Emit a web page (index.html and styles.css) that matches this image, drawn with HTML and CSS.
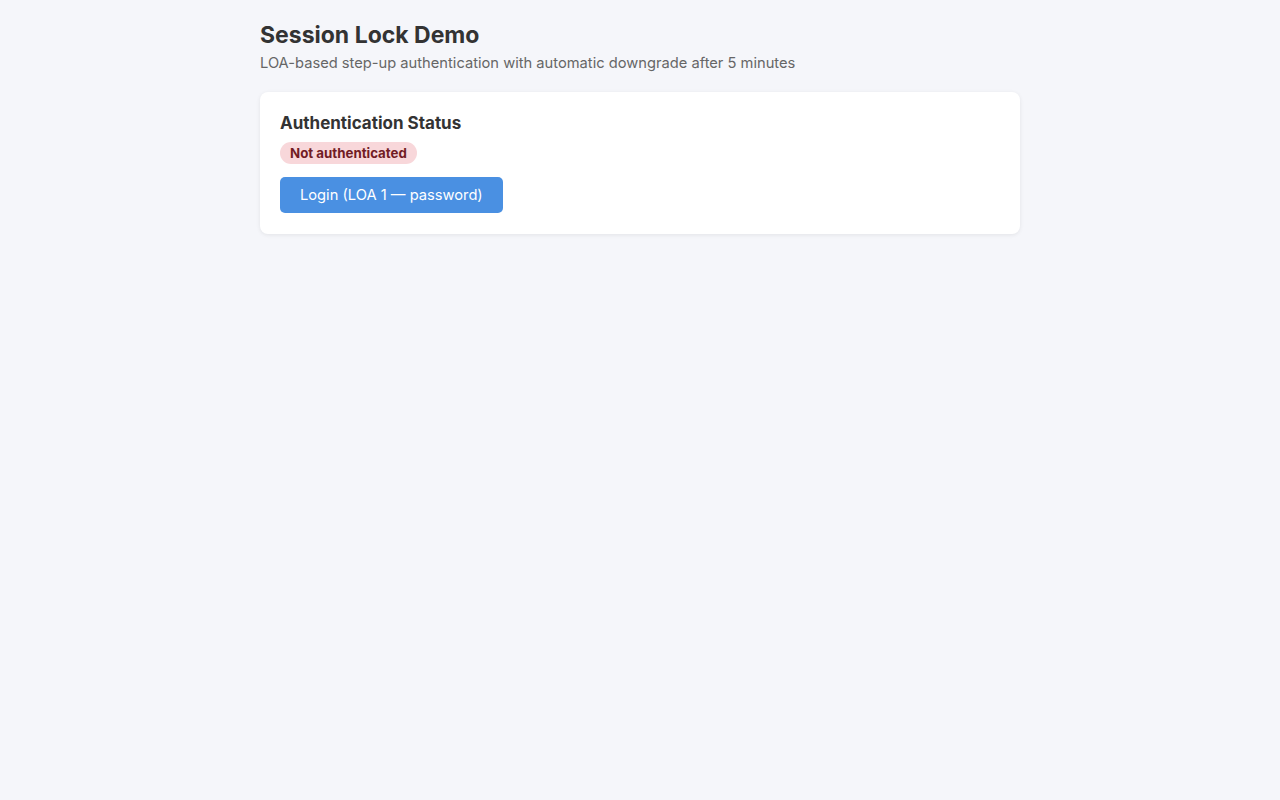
FILE: index.html
```html
<!DOCTYPE html>
<html lang="en">
<head>
    <meta charset="UTF-8">
    <meta name="viewport" content="width=device-width, initial-scale=1.0">
    <title>Session Lock Demo</title>
    <link rel="stylesheet" href="styles.css">
</head>
<body>
    <main class="container">
        <header class="page-header">
            <h1>Session Lock Demo</h1>
            <p class="subtitle">LOA-based step-up authentication with automatic downgrade after 5 minutes</p>
        </header>

        <section class="card">
            <h2>Authentication Status</h2>
            <div class="status">
                <span class="badge badge-none">Not authenticated</span>
            </div>
            <div class="actions">
                <button class="btn btn-primary">Login (LOA 1 — password)</button>
            </div>
        </section>
    </main>
</body>
</html>
```

FILE: styles.css
```css
* {
    margin: 0;
    padding: 0;
    box-sizing: border-box;
}

body {
    font-family: Inter, "Noto Sans", sans-serif;
    background-color: #f5f6fa;
    color: #333;
    line-height: 1.5;
}

.container {
    max-width: 760px;
    margin: 0 auto;
    padding: 20px 0;
}

.page-header h1 {
    font-size: 23px;
    font-weight: 700;
    line-height: 1.3;
    margin-top: 1px;
}

.subtitle {
    font-size: 14.7px;
    color: #666;
    margin-top: 1px;
}

.card {
    background-color: #fff;
    border-radius: 8px;
    box-shadow: 0 1px 4px rgba(0, 0, 0, 0.08);
    padding: 20px 20px 21px;
    margin-top: 18px;
}

.card h2 {
    font-size: 17px;
    font-weight: 700;
    line-height: 22px;
}

.status {
    display: flex;
    margin-top: 8px;
}

.badge {
    font-size: 13.3px;
    font-weight: 700;
    line-height: 20px;
    padding: 1px 10px;
    border-radius: 12px;
}

.badge-none {
    background-color: #f8d7da;
    color: #721c24;
}

.actions {
    display: flex;
    margin-top: 13px;
}

.btn {
    font-family: inherit;
    font-size: 14.7px;
    line-height: 20px;
    border: none;
    border-radius: 5px;
    padding: 8px 20px;
    cursor: pointer;
}

.btn-primary {
    background-color: #4a90e2;
    color: #fff;
}
```
